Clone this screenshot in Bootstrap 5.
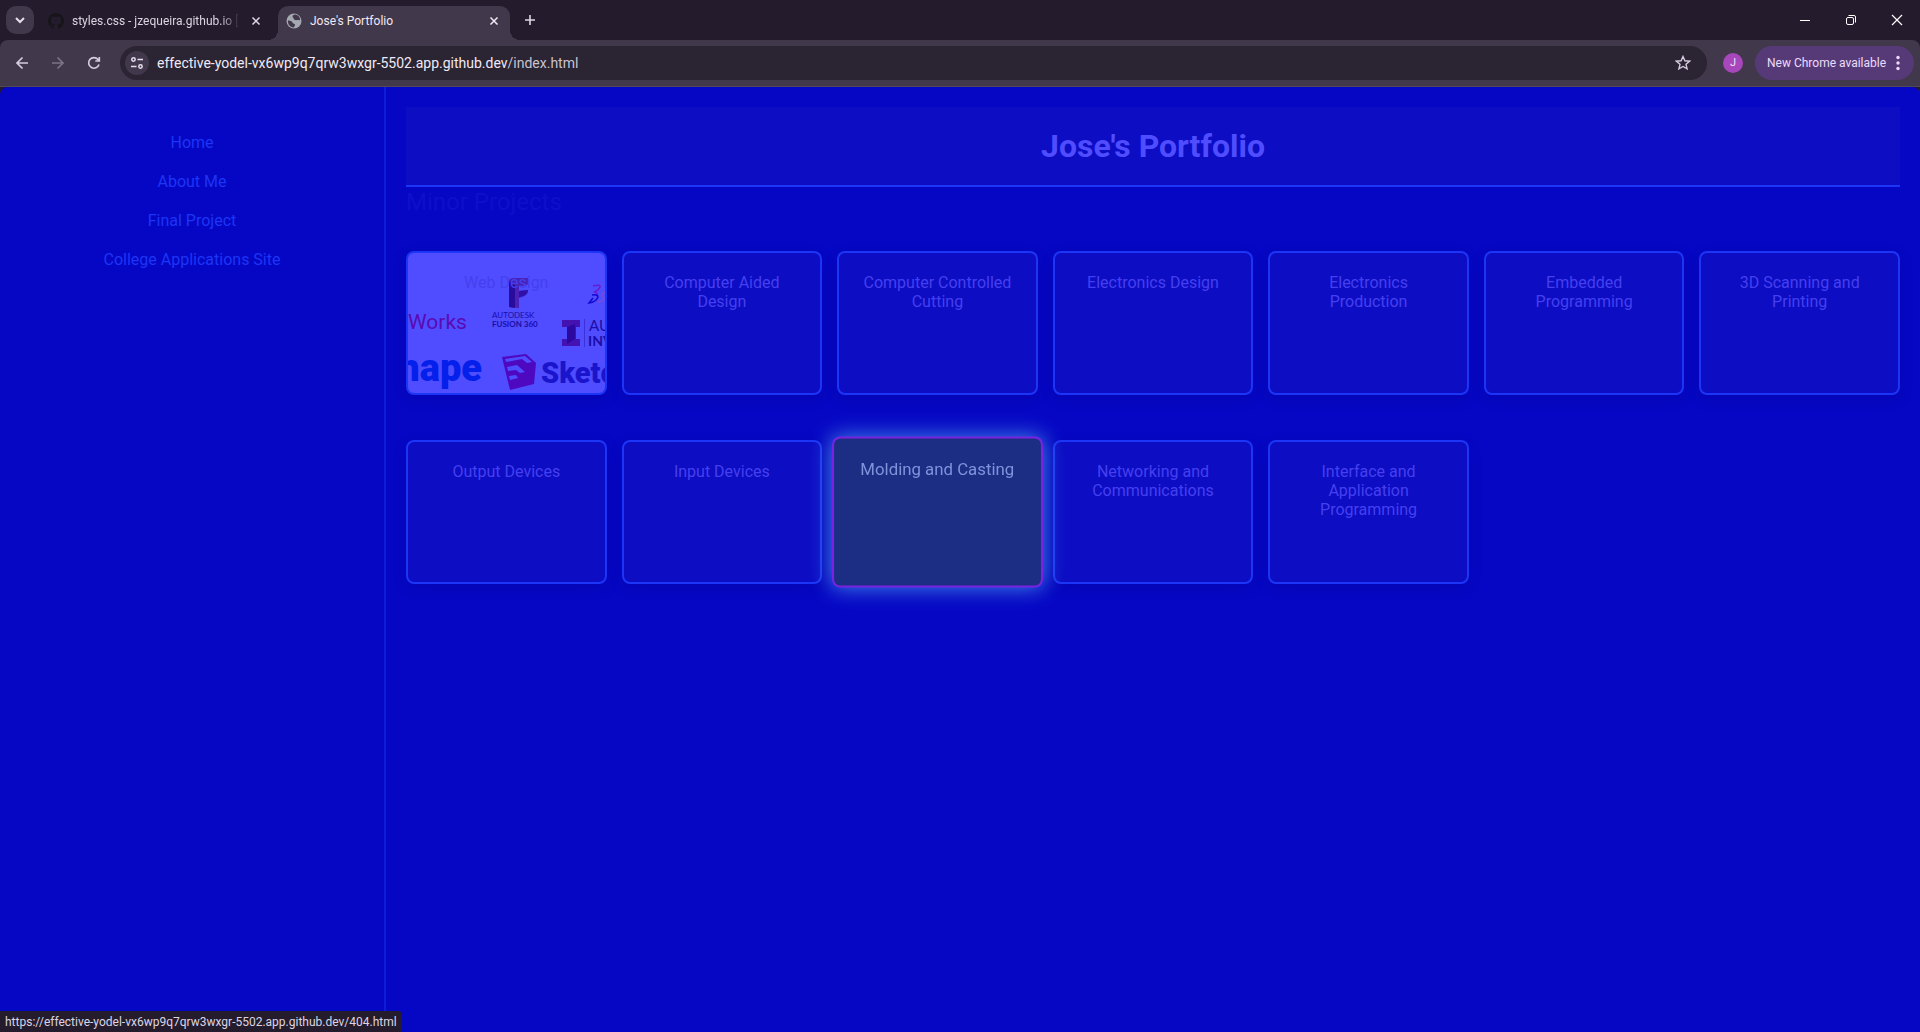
<!DOCTYPE html>
<html lang="en">
<head>
<meta charset="utf-8">
<meta name="viewport" content="width=device-width, initial-scale=1">
<title>Jose's Portfolio</title>
<link href="https://cdn.jsdelivr.net/npm/bootstrap@5.3.0/dist/css/bootstrap.min.css" rel="stylesheet">
<style>
body { background: #241c2c; font-family: Roboto, sans-serif; }
button { background: none; border: 0; padding: 0; color: inherit; }
svg { display: block; flex: none; }
.chrome-ui { font-family: Roboto, sans-serif; font-size: 12px; line-height: 16px; color: #dcd5e2; }
.tabstrip { height: 40px; }
.tab-search { width: 28px; height: 28px; border-radius: 10px; background: #42384b; margin: 0 14px 0 6px; }
.tab-item { height: 34px; }
.tab-back { width: 222px; padding-right: 6px; }
.tab-front { width: 232px; background: #42384b; border-radius: 10px 10px 0 0; position: relative; color: #f0eaf5; }
.tab-front::before, .tab-front::after { content: ""; position: absolute; bottom: 0; width: 10px; height: 10px; }
.tab-front::before { left: -10px; background: radial-gradient(circle at 0 0, transparent 10px, #42384b 10px); }
.tab-front::after { right: -10px; background: radial-gradient(circle at 100% 0, transparent 10px, #42384b 10px); }
.fade-title { -webkit-mask-image: linear-gradient(90deg, #000 88%, transparent); mask-image: linear-gradient(90deg, #000 88%, transparent); }
.win-buttons { width: 138px; }
.toolbar { height: 47px; background: #42384b; border-radius: 8px 8px 0 0; border-bottom: 1px solid #514859; padding: 0 6px 0 4px; }
.tool-btn { width: 36px; height: 34px; }
.omnibox { height: 34px; border-radius: 17px; background: #2a2433; margin: 0 16px 0 8px; padding: 0 16px 0 5px; }
.site-info { width: 24px; height: 24px; border-radius: 50%; background: #42384b; }
.url-text { font-size: 14px; color: #f0eaf5; }
.url-path { color: #c9c2d0; }
.avatar-dot { width: 20px; height: 20px; border-radius: 50%; background: #a846bb; font-size: 11px; color: #f4dff8; margin-right: 12px; }
.update-pill { height: 34px; border-radius: 17px; background: #563a78; padding: 0 10px 0 12px; color: #ecdcfb; width: 159px; }
.page-view { background: #0607c4; border-radius: 8px 8px 0 0; overflow: hidden; }
.side-nav { flex: 0 0 386px; border-right: 2px solid #0e1bd8; padding: 46px 0; gap: 20px; font-size: 16px; line-height: 19px; }
.side-nav a { color: #1c35f6; text-decoration: none; }
.main-area { padding: 20px; }
.page-head { background: #0d0dc4; border-bottom: 2px solid #1c35f6; height: 80px; }
.page-head h1 { font-size: 32px; line-height: 38px; font-weight: 700; color: #4f4dff; }
.section-title { font-size: 24px; line-height: 30px; font-weight: 400; color: #0d0fca; margin: 0 0 34px; }
.project-grid { display: grid; grid-template-columns: repeat(7, minmax(0, 1fr)); gap: 45px 15px; }
.project { display: block; height: 144px; border: 2px solid #1c35f6; border-radius: 8px; background: #0d0dc4; box-shadow: 0 4px 15px rgba(0,0,40,.1); padding: 20px 18px; color: #4540ee; text-align: center; text-decoration: none; font-size: 16px; line-height: 19px; position: relative; }
.project-hover { background: #1b2e84; border-color: #7a22e0; color: #7f93dc; transform: scale(1.05); box-shadow: 0 0 20px #4488e4; z-index: 1; }
.project-photo { background: #4f4dff; overflow: hidden; }
.project-photo svg { position: absolute; inset: 0; width: 100%; height: 100%; }
.project-photo span { position: relative; z-index: 1; }
.status-bubble { position: fixed; left: 0; bottom: 0; height: 21px; background: #241c2c; border-radius: 0 4px 0 0; padding: 3px 5px 2px 5px; color: #dcd5e2; }
</style>
<script src="https://cdn.jsdelivr.net/npm/bootstrap@5.3.0/dist/js/bootstrap.bundle.min.js"></script>
</head>
<body class="min-vh-100 d-flex flex-column">
<header class="chrome-ui">
  <div class="tabstrip d-flex align-items-center">
    <button class="tab-search d-flex align-items-center justify-content-center" aria-label="Search tabs"><svg width="10" height="10" viewBox="0 0 10 10" fill="none" stroke="#e6deed" stroke-width="2"><path d="M1 3l4 4 4-4"/></svg></button>
    <div class="tab-item tab-back d-flex align-items-center align-self-end pb-1">
      <svg width="16" height="16" viewBox="0 0 16 16" fill="#17151a"><path d="M8 0C3.58 0 0 3.58 0 8c0 3.54 2.29 6.53 5.47 7.59.4.07.55-.17.55-.38v-1.49c-2.01.37-2.53-.49-2.69-.94-.09-.23-.48-.94-.82-1.13-.28-.15-.68-.52-.01-.53.63-.01 1.08.58 1.23.82.72 1.21 1.87.87 2.33.66.07-.52.28-.87.51-1.07-1.78-.2-3.64-.89-3.64-3.95 0-.87.31-1.59.82-2.15-.08-.2-.36-1.02.08-2.12 0 0 .67-.21 2.2.82a7.6 7.6 0 0 1 4 0c1.53-1.04 2.2-.82 2.2-.82.44 1.1.16 1.92.08 2.12.51.56.82 1.27.82 2.15 0 3.07-1.87 3.75-3.65 3.95.29.25.54.73.54 1.48v2.2c0 .21.15.46.55.38A8 8 0 0 0 16 8c0-4.42-3.58-8-8-8z"/></svg>
      <span class="flex-grow-1 text-nowrap ms-2 me-2 fade-title">styles.css - jzequeira.github.io [</span>
      <button aria-label="Close tab"><svg width="16" height="16" viewBox="0 0 16 16" stroke="#e0d9e6" stroke-width="1.5"><path d="M4.5 4.5l7 7m0-7l-7 7"/></svg></button>
    </div>
    <div class="tab-item tab-front d-flex align-items-center align-self-end ms-2 ps-2 pe-2 pb-1">
      <svg width="16" height="16" viewBox="0 0 16 16"><circle cx="8" cy="8" r="7.5" fill="#a4a8b0"/><path d="M9 1.500C6.500 2 6 3.500 7 4.500s.5 2 2 2.500 3.500-.5 5 .5c.5-3-1.500-5.500-5-6zM2 7.500c1.500 0 4 .5 4.500 2s2 1 2.500 2-1 1.500-1 3C4.500 14.500 1.500 11.500 2 7.500z" fill="#42384b"/></svg>
      <span class="flex-grow-1 ms-2 text-nowrap">Jose's Portfolio</span>
      <button aria-label="Close tab"><svg width="16" height="16" viewBox="0 0 16 16" stroke="#f0eaf5" stroke-width="1.5"><path d="M4.5 4.5l7 7m0-7l-7 7"/></svg></button>
    </div>
    <button class="ms-2 ps-1" aria-label="New tab"><svg width="16" height="16" viewBox="0 0 16 16" stroke="#dcd5e2" stroke-width="1.6"><path d="M8 3v10M3 8h10"/></svg></button>
    <div class="win-buttons d-flex justify-content-around ms-auto">
      <button aria-label="Minimize"><svg width="12" height="12" viewBox="0 0 12 12" stroke="#fff"><path d="M1 6.5h10"/></svg></button>
      <button aria-label="Restore"><svg width="12" height="12" viewBox="0 0 12 12" fill="none" stroke="#fff"><rect x="1.5" y="3.5" width="7" height="7" rx="1.5"/><path d="M3.5 1.5H9A1.5 1.5 0 0 1 10.5 3v5.5"/></svg></button>
      <button aria-label="Close"><svg width="12" height="12" viewBox="0 0 12 12" stroke="#fff" stroke-width="1.2"><path d="M1 1l10 10M11 1L1 11"/></svg></button>
    </div>
  </div>
  <div class="toolbar d-flex align-items-center">
    <button class="tool-btn d-flex align-items-center justify-content-center" aria-label="Back"><svg width="16" height="16" viewBox="0 0 16 16" fill="none" stroke="#d6cbe0" stroke-width="1.7"><path d="M14 8H3m5.5-5.5L3 8l5.5 5.5"/></svg></button>
    <button class="tool-btn d-flex align-items-center justify-content-center" aria-label="Forward"><svg width="16" height="16" viewBox="0 0 16 16" fill="none" stroke="#7d7387" stroke-width="1.7"><path d="M2 8h11M7.5 2.5L13 8l-5.5 5.5"/></svg></button>
    <button class="tool-btn d-flex align-items-center justify-content-center" aria-label="Reload"><svg width="16" height="16" viewBox="0 0 16 16" fill="none" stroke="#d6cbe0" stroke-width="1.7"><path d="M13 9.5A5.3 5.3 0 1 1 12 4.5l1 1M13.3 2v4H9.3"/></svg></button>
    <div class="omnibox flex-grow-1 d-flex align-items-center">
      <button class="site-info d-flex align-items-center justify-content-center me-2" aria-label="Site information"><svg width="14" height="14" viewBox="0 0 14 14" fill="none" stroke="#e6deed" stroke-width="1.5"><circle cx="3.5" cy="3.5" r="1.7"/><path d="M7.5 3.5H13M1 10.5h5.500"/><circle cx="10.5" cy="10.5" r="1.7"/></svg></button>
      <div class="url-text flex-grow-1" role="textbox" aria-label="Address" contenteditable="true" spellcheck="false">effective-yodel-vx6wp9q7qrw3wxgr-5502.app.github.dev<span class="url-path">/index.html</span></div>
      <button aria-label="Bookmark"><svg width="16" height="16" viewBox="0 0 16 16" fill="none" stroke="#d6cbe0" stroke-width="1.4"><path d="M8 1.5l1.900 4.300 4.700.4-3.600 3.100 1.100 4.600L8 11.500l-4.100 2.400L5 9.300 1.400 6.200l4.700-.4z"/></svg></button>
    </div>
    <button class="avatar-dot d-flex align-items-center justify-content-center" aria-label="Profile">J</button>
    <button class="update-pill d-flex align-items-center justify-content-between text-nowrap">New Chrome available<svg width="12" height="16" viewBox="0 0 12 16" fill="#ecdcfb"><circle cx="6" cy="2.5" r="1.7"/><circle cx="6" cy="8" r="1.7"/><circle cx="6" cy="13.5" r="1.7"/></svg></button>
  </div>
</header>
<div class="page-view d-flex flex-grow-1">
  <nav class="side-nav d-flex flex-column align-items-center">
    <a href="#">Home</a><a href="#">About Me</a><a href="#">Final Project</a><a href="#">College Applications Site</a>
  </nav>
  <main class="main-area flex-grow-1">
    <div class="page-head d-flex align-items-center justify-content-center"><h1 class="m-0">Jose's Portfolio</h1></div>
    <h2 class="section-title">Minor Projects</h2>
    <div class="project-grid">
      <a class="project project-photo" href="#"><span>Web Design</span>
        <svg viewBox="2 2 197 140" preserveAspectRatio="xMinYMin slice" aria-hidden="true">
          <text x="2" y="78" font-family="Roboto, sans-serif" font-size="21" fill="#5a0ab4">Works</text>
          <path d="M103 30q0-3 5-3h14v6q-2 2-9 2v5l9-1q0 6-9 8v10l-10-1z" fill="#4a22b8"/><path d="M103 30l6 4v23l-6-1z" fill="#2a0c9c"/><path d="M113 40l9-1q0 6-9 7z" fill="#3010a8"/>
          <g font-family="Lato, sans-serif" fill="#1c0ca8">
            <text x="86" y="67" font-size="8">AUTODESK</text>
            <text x="86" y="76" font-size="8" font-weight="700">FUSION 360</text>
            <text x="183" y="80" font-size="15">AU</text>
            <text x="182" y="95" font-size="14" font-weight="700">INV</text>
          </g>
          <path d="M156 69h18v7h-4v12h4v7h-18v-7h5V76h-5z" fill="#4412b0"/><path d="M161 76l8-3v15l-8 5z" fill="#2c08a0"/><path d="M178.500 68v28" stroke="#3c30d8"/>
          <g fill="none" stroke-width="1.500"><path d="M187 35q8-2 7 1t-6 5q5 0 2 4" stroke="#6a1ad0"/><path d="M186 44q6-1 6 2-2 5-9 6l4-5" stroke="#1408d0"/><path d="M200 41q-6 1-3 5t-5 5" stroke="#7a4ad8"/></g>
          <g font-family="Roboto, sans-serif" font-weight="900">
            <text x="76" y="130" font-size="38" text-anchor="end" fill="#0420ea">hape</text>
            <text x="135" y="132" font-size="29" fill="#1a14cc">Sketc</text>
          </g>
          <path d="M96 106l24-3 10 9-2 21-24 6z" fill="#4e08c0"/>
          <path d="M99 108l20-3 7 6-5 1-5-4-16 3zM101 116l10-2 8 7-5 1-4-3-8 1zM103 125l7-1 2 3-8 2z" fill="#4f4dff"/>
        </svg>
      </a>
      <a class="project" href="#">Computer Aided Design</a>
      <a class="project" href="#">Computer Controlled Cutting</a>
      <a class="project" href="#">Electronics Design</a>
      <a class="project" href="#">Electronics Production</a>
      <a class="project" href="#">Embedded Programming</a>
      <a class="project" href="#">3D Scanning and Printing</a>
      <a class="project" href="#">Output Devices</a>
      <a class="project" href="#">Input Devices</a>
      <a class="project project-hover" href="#">Molding and Casting</a>
      <a class="project" href="#">Networking and Communications</a>
      <a class="project" href="#">Interface and Application Programming</a>
    </div>
  </main>
</div>
<div class="chrome-ui status-bubble text-nowrap">https://effective-yodel-vx6wp9q7qrw3wxgr-5502.app.github.dev/404.html</div>
</body>
</html>
